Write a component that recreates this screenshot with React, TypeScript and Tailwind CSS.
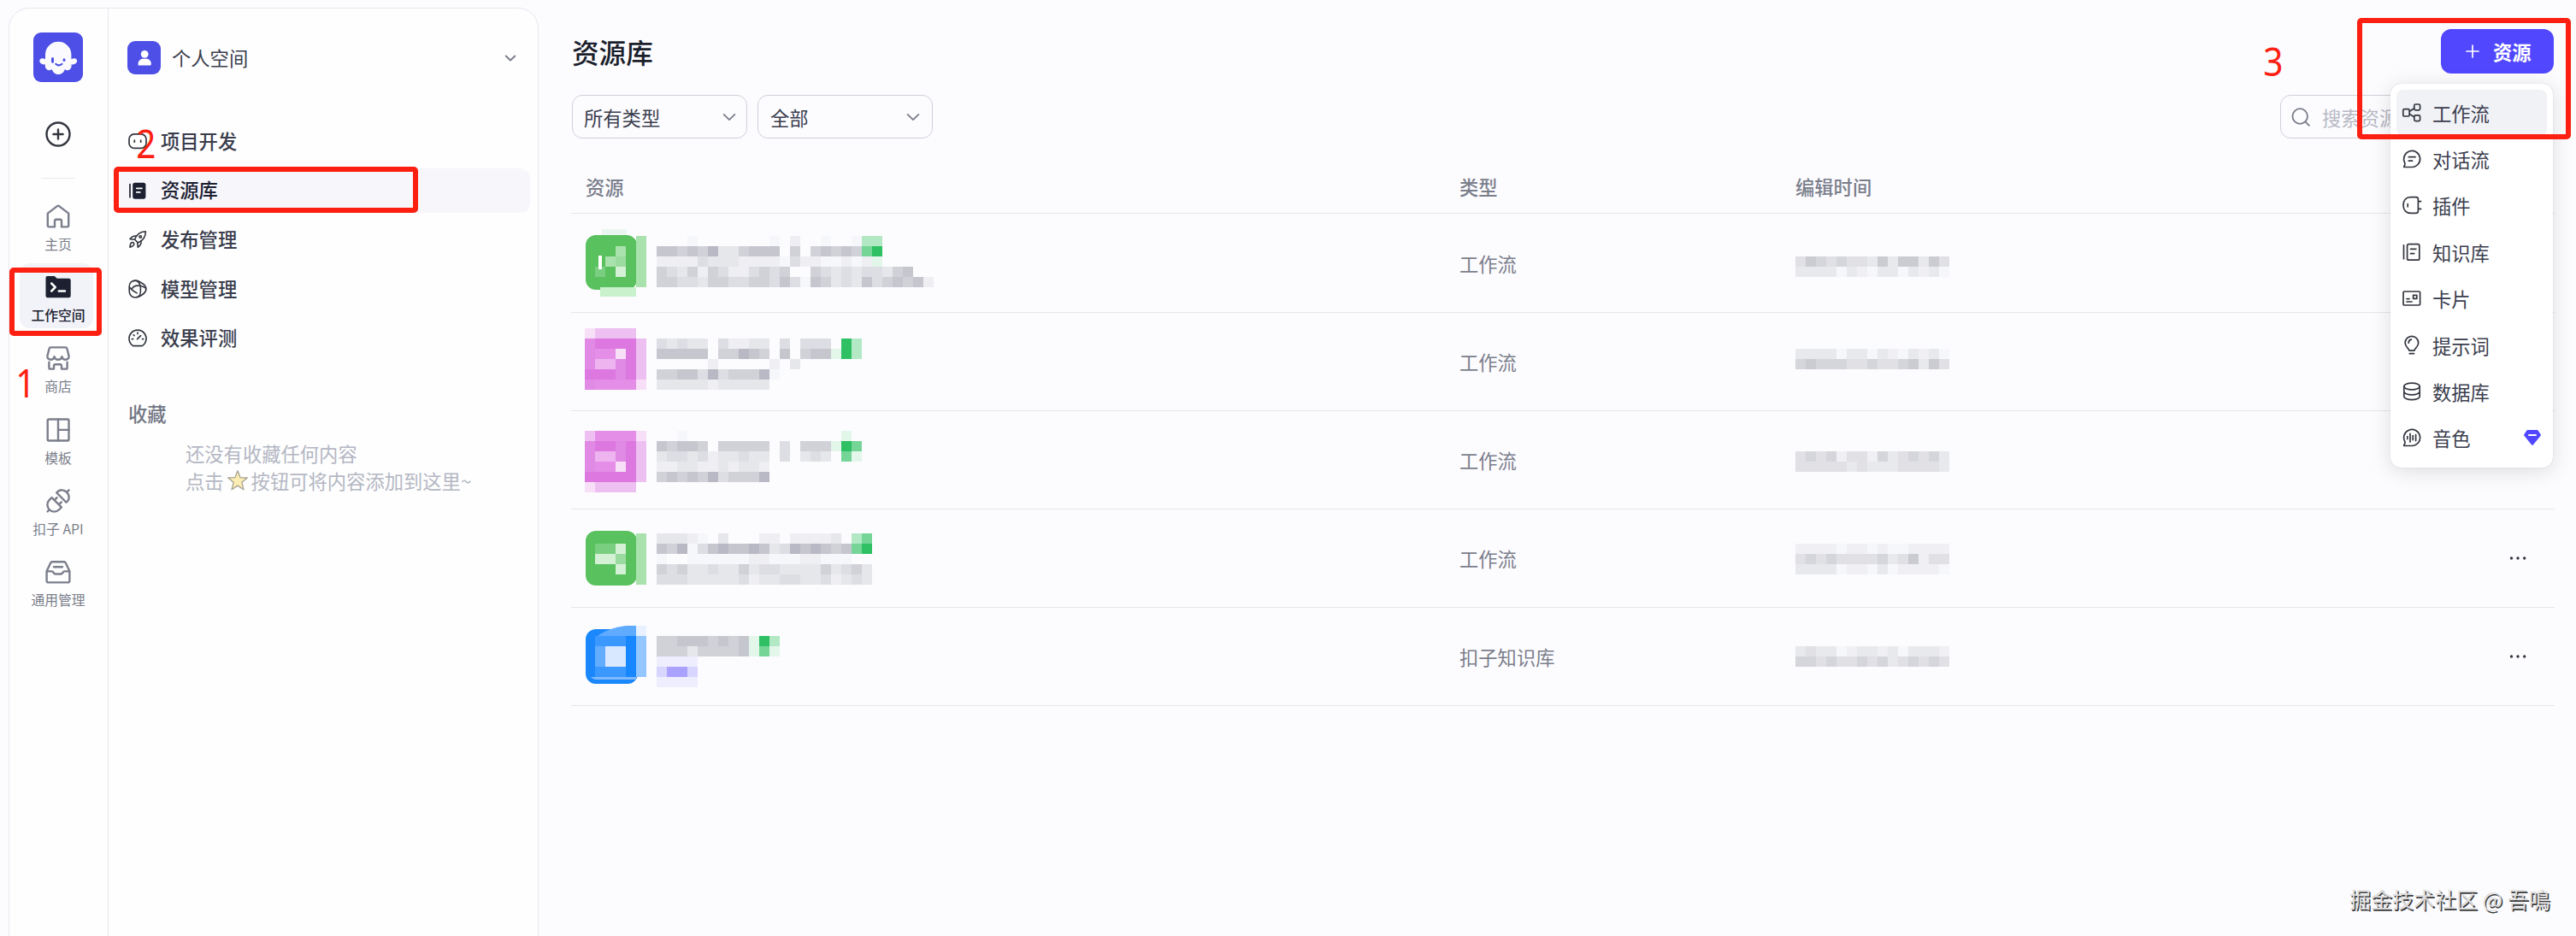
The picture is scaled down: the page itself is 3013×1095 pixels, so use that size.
import React from "react";

type IconProps = { children: React.ReactNode; className?: string; sw?: number };

/** 32-unit outline icon used in the left rail. */
const RailIcon = ({ children, className = "text-[#7b7e8b]" }: IconProps) => (
  <svg viewBox="0 0 32 32" className={`h-8 w-8 shrink-0 ${className}`} fill="none" stroke="currentColor" strokeWidth="2.4" strokeLinecap="round" strokeLinejoin="round">
    {children}
  </svg>
);

/** 24-unit outline icon used in menus. */
const MenuIcon = ({ children, className = "text-[#33363f]", sw = 1.7 }: IconProps) => (
  <svg viewBox="0 0 24 24" className={`h-6 w-6 shrink-0 ${className}`} fill="none" stroke="currentColor" strokeWidth={sw} strokeLinecap="round" strokeLinejoin="round">
    {children}
  </svg>
);

const Chevron = ({ className }: { className: string }) => (
  <svg viewBox="0 0 16 16" className={`h-4 w-4 ${className}`} fill="none" stroke="currentColor" strokeWidth="1.7" strokeLinecap="round" strokeLinejoin="round">
    <path d="M1.6 4.8 8 11.2l6.4-6.4" />
  </svg>
);

const railItems = [
  {
    label: "主页",
    icon: (
      <RailIcon>
        <path d="M3.8 12.6 14.9 4.1a1.8 1.8 0 0 1 2.2 0l11.1 8.5V27a1.4 1.4 0 0 1-1.4 1.4H20v-6.6a2 2 0 0 0-2-2h-4a2 2 0 0 0-2 2v6.6H5.2A1.4 1.4 0 0 1 3.8 27Z" />
      </RailIcon>
    ),
  },
  {
    label: "工作空间",
    active: true,
    icon: (
      <RailIcon className="text-[#1c2030]">
        <path d="M1.5 5A2 2 0 0 1 3.5 3h8.2l3 2.8h13.8a2.2 2.2 0 0 1 2.2 2.2v18a2.2 2.2 0 0 1-2.2 2.200H3.700A2.200 2.200 0 0 1 1.500 26Z" fill="currentColor" stroke="none" />
        <path d="m8.200 11.500 4.500 4.500-4.500 4.500M16.800 20.600h7.200" stroke="#fff" strokeWidth="2.500" />
      </RailIcon>
    ),
  },
  {
    label: "商店",
    icon: (
      <RailIcon>
        <path d="M5.600 4.800A1.800 1.800 0 0 1 7.400 3.400h17.200a1.800 1.800 0 0 1 1.800 1.400l2.200 8.700c.2 2.900-1.800 4.200-3.900 4.200-2.200 0-3.900-1.600-4.300-3.500-.4 1.900-2.100 3.500-4.400 3.500s-4-1.600-4.400-3.500c-.4 1.900-2.100 3.500-4.300 3.500-2.100 0-4.100-1.300-3.900-4.200Z" />
        <path d="M5.400 20.600v6.600a1.400 1.400 0 0 0 1.400 1.400H11v-3.400a2 2 0 0 1 2-2h5a2 2 0 0 1 2 2v3.400h5.200a1.400 1.400 0 0 0 1.400-1.400v-6.600" />
      </RailIcon>
    ),
  },
  {
    label: "模板",
    icon: (
      <RailIcon>
        <rect x="3.700" y="3.500" width="24.800" height="25" rx="1.600" />
        <path d="M16 3.500v25M16 15.900h12.500" />
      </RailIcon>
    ),
  },
  {
    label: "扣子 API",
    icon: (
      <RailIcon>
        <g transform="rotate(45 16 16)">
          <path d="M8 10.500h16v-1.800a8 7 0 0 0-16 0ZM16 1.700V-1.800" />
          <path d="M8 18.500h16v4a8 8 0 0 1-16 0ZM16 30.500v3M12.300 18.200v-3.900M19.700 18.200v-3.900" />
        </g>
      </RailIcon>
    ),
  },
  {
    label: "通用管理",
    icon: (
      <RailIcon>
        <path d="M2.600 15.200 7.200 5.400a2 2 0 0 1 1.800-1.200h14a2 2 0 0 1 1.800 1.200l4.600 9.800v11.400a1.800 1.800 0 0 1-1.800 1.800H4.400a1.800 1.800 0 0 1-1.800-1.800ZM2.600 15.400h6.200c1.600 0 1.800 3.100 4 3.100h6.400c2.200 0 2.400-3.100 4-3.100h6.200M11 10.300h10" />
      </RailIcon>
    ),
  },
];

const bookOutline = (
  <>
    <rect x="6.600" y="2.600" width="14.200" height="18.600" rx="1.800" />
    <path d="M2.500 3.800v16M10.500 8.300h6.400M10.500 13.600h4.200" />
  </>
);

const sideItems = [
  {
    label: "项目开发",
    icon: (
      <MenuIcon>
        <rect x="2" y="3.800" width="20" height="16.600" rx="6" />
        <path d="M8.300 11v2.200M15.700 11v2.200" />
      </MenuIcon>
    ),
  },
  {
    label: "资源库",
    active: true,
    icon: (
      <MenuIcon className="text-[#1c2030]">
        <rect x="6.200" y="2.700" width="15.200" height="19" rx="2.600" fill="currentColor" stroke="none" />
        <path d="M3 4.700v15" />
        <path d="M10.800 9.300h6.200M10.800 13.900h4" stroke="#fff" />
      </MenuIcon>
    ),
  },
  {
    label: "发布管理",
    icon: (
      <MenuIcon sw={1.6}>
        <path d="M8.600 12.200C10.500 6.600 14.600 3 21.300 2.700c.1 6.500-3.200 10.900-8.900 13.200Z" />
        <path d="M10.600 8.100c-3.200-.7-5.200.4-7.600 3.600l5.600.5M16 13.600c.6 3.200-.4 5.300-3.700 7.700l-.5-5.500" />
        <path d="M3 21.300c.1-3 .6-4.600 2-5.600 1.700-.7 3.300.8 2.600 2.600-1 1.600-2.200 2.300-4.600 3Z" />
        <circle cx="15.200" cy="9" r="1.300" />
      </MenuIcon>
    ),
  },
  {
    label: "模型管理",
    icon: (
      <MenuIcon sw={1.6}>
        <path d="M2.200 14.500V9.300c0-3.900 2.600-7.100 6.600-7.100 3.700 0 6.600 3.600 6.600 8.700v4.200c0 4.300-2.700 6.900-6.200 6.900-4 0-7-3-7-7.500Z" />
        <path d="M7 2.700c2-.9 4.400-.6 6.600.6l4.600 2.700c3.600 2.100 4.700 5.900 2.900 9-1.700 3-5.400 5.200-9.900 6.700" />
        <path d="M2.600 9.800c1 2 2.600 3.600 5.400 5.200l3.200 1.900M5.200 12.200C6.600 9 10 7.600 14.500 8.300c2.600.4 4.800 1 6.600 2.600" />
      </MenuIcon>
    ),
  },
  {
    label: "效果评测",
    icon: (
      <MenuIcon>
        <path d="M6.700 20.600a10 10 0 1 1 10.600 0Z" />
        <path d="m11.600 12.600 4-4M12 5.200v1.200M5.400 12.600h1.200M17.500 12.600h1.200M7.200 7.800l.8.800" />
      </MenuIcon>
    ),
  },
];

const createItems = [
  {
    label: "工作流",
    active: true,
    icon: (
      <MenuIcon>
        <rect x="1.800" y="7.600" width="7.400" height="8.400" rx="1.600" />
        <rect x="14.800" y="2" width="6.800" height="6.800" rx="1.600" />
        <rect x="14.800" y="14.800" width="6.800" height="6.800" rx="1.600" />
        <path d="m9.400 10.200 5.200-3.400M9.400 13.400l5.200 3.400" />
      </MenuIcon>
    ),
  },
  {
    label: "对话流",
    icon: (
      <MenuIcon>
        <path d="M3.300 21.500h8.900A9.500 9.500 0 1 0 3.800 16.600c.4 1.400.2 2.700-.9 4-.4.500-.1.900.4.900Z" />
        <path d="M8.300 9.700h7.800M8.300 14.200h4.300" />
      </MenuIcon>
    ),
  },
  {
    label: "插件",
    icon: (
      <MenuIcon>
        <path d="M10.600 2.600h6.200a2.600 2.600 0 0 1 2.600 2.600v13.600a2.600 2.600 0 0 1-2.600 2.600h-6.200C5.400 21.400 2 18 2 12s3.400-9.400 8.600-9.400ZM19.600 7.600h3M19.600 16.400h3M7.200 10.600v3.200" />
      </MenuIcon>
    ),
  },
  { label: "知识库", icon: <MenuIcon>{bookOutline}</MenuIcon> },
  {
    label: "卡片",
    icon: (
      <MenuIcon>
        <rect x="2" y="4" width="19.600" height="16" rx="1.200" />
        <rect x="13.600" y="8.300" width="4.200" height="4" />
        <path d="M6 12.600h3M6 16h6" />
      </MenuIcon>
    ),
  },
  {
    label: "提示词",
    icon: (
      <MenuIcon>
        <path d="M9 18.200c0-2.400-4.900-4-4.900-9.100a7.800 7.800 0 0 1 15.600 0c0 5.100-4.900 6.700-4.900 9.100ZM9.300 21.700h5.200M8.200 9.200c0-2.200 1.400-3.700 3.200-4" />
      </MenuIcon>
    ),
  },
  {
    label: "数据库",
    icon: (
      <MenuIcon>
        <ellipse cx="12" cy="6" rx="9.200" ry="3.900" />
        <path d="M2.800 6v11.800c0 2.200 4.100 3.900 9.200 3.900s9.200-1.700 9.200-3.900V6M2.800 12c0 2.200 4.100 3.900 9.200 3.900s9.200-1.700 9.200-3.900" />
      </MenuIcon>
    ),
  },
  {
    label: "音色",
    premium: true,
    icon: (
      <MenuIcon>
        <path d="M3.300 21.500h8.900A9.500 9.500 0 1 0 3.800 16.600c.4 1.400.2 2.700-.9 4-.4.500-.1.900.4.900Z" />
        <path d="M6.800 10.600v3M10 7.300v9.600M13.200 9.600v5M16.600 8.600v7" />
      </MenuIcon>
    ),
  },
];

/** Colours of the pixelated cells, one letter or digit per shade. */
const shades: Record<string, string> = {
  "1": "#f6f7fa",
  "2": "#efeff3",
  "3": "#e6e7eb",
  "4": "#dddee3",
  "5": "#d1d2d8",
  "6": "#c6c7ce",
  "7": "#b8b9c4",
  g: "#2fc063",
  h: "#75d597",
  i: "#b2e8c4",
  j: "#e2f6ea",
  p: "#eeeeff",
  q: "#d8d5fe",
  r: "#aba1ff",
  a: "#a9e2ad",
  b: "#7ace80",
  c: "#d4f1d6",
  d: "#9bdb9f",
  A: "#dd78e0",
  B: "#e48ee8",
  C: "#edb4f0",
  D: "#f8dff8",
  E: "#eec0f1",
  F: "#e08ae5",
  K: "#3a98ff",
  L: "#62adff",
  M: "#d8e8ff",
  N: "#94c6ff",
  O: "#e8f1ff",
  P: "#1787ff",
};

const Mosaic = ({ x, y, rows }: { x: number; y: number; rows: string[] }) => (
  <g shapeRendering="crispEdges">
    {rows.flatMap((row, r) =>
      row.split("").map((c, i) =>
        shades[c] ? <rect key={`${r}-${i}`} x={x + i * 12} y={y + r * 12} width="12" height="12" fill={shades[c]} /> : null
      )
    )}
  </g>
);

const resources = [
  {
    type: "工作流",
    top: 250,
    height: "h-[116px]",
    drawing: (
      <>
        <rect x="704" y="268" width="29" height="9" fill="#e9f6ee" />
        <rect x="685" y="275" width="60" height="64" rx="12" fill="#59c15e" />
        <rect x="702" y="336" width="42" height="11" fill="#c9f1cc" />
        <Mosaic x={684} y={276} rows={[".....a", "...a.a", "..ad.a", ".b.c.a", ".....a"]} />
        <rect x="700" y="299" width="4" height="16" fill="#fff" />
        <Mosaic
          x={768}
          y={276}
          rows={[
            "...1.......1.2..1..1ii",
            "665657335666.5.56565hg",
            "222243332222142211212j",
            "5435254224545..5434344356",
            "554435544554641653436456562",
          ]}
        />
      </>
    ),
    dateY: 300,
    date: ["465454436366364", "333313213313231"],
  },
  {
    type: "工作流",
    top: 366,
    height: "h-[115px]",
    drawing: (
      <>
        <Mosaic x={684} y={384} rows={["DEEEE", "FAAAAE", "FBBDAE", "FCCFAE", "AAAFAE", "FBBBBD"]} />
        <Mosaic
          x={768}
          y={396}
          rows={["43433.42233.4.444.gi", "66666.55765.6.566jgi", ".....2.....2.3", "556647455571", "33333233333"]}
        />
      </>
    ),
    dateY: 408,
    date: ["333313313213231", "565554454456364"],
  },
  {
    type: "工作流",
    top: 481,
    height: "h-[115px]",
    drawing: (
      <>
        <Mosaic x={684} y={504} rows={["EBBBBD", "FAAFAE", "FCCFAE", "FBBDAE", "AAAAAE", "DEEEE"]} />
        <Mosaic
          x={768}
          y={504}
          rows={["..1...............j", "65665.55555.4.555jgh", "34434233433.4.343.hj", "22332232332", "56565745557"]}
        />
      </>
    ),
    dateY: 528,
    date: ["454524425345453", "444443433344443"],
  },
  {
    type: "工作流",
    top: 596,
    height: "h-[115px]",
    more: true,
    drawing: (
      <>
        <rect x="685" y="621" width="60" height="64" rx="12" fill="#59c15e" />
        <Mosaic x={684} y={624} rows={[".....a", ".bbc.a", ".ccd.a", "...c.a", ".....a"]} />
        <Mosaic
          x={768}
          y={624}
          rows={[
            "33321.3...22.22223.ih",
            "6571467667634767656hg",
            "1..1111112211122111",
            "545334335344333353453",
            "444333334233443342343",
          ]}
        />
      </>
    ),
    dateY: 636,
    date: ["222212212112222", "454544445346244", "333312213122221"],
  },
  {
    type: "扣子知识库",
    top: 711,
    height: "h-[115px]",
    more: true,
    drawing: (
      <>
        <rect x="685" y="736" width="61" height="64" rx="12" fill="#1a88fc" />
        <path d="M700 743 Q714 734 732 732 H744 V744 H700Z" fill="#5fabff" />
        <Mosaic x={684} y={732} rows={[".....O", ".KKKPN", ".LMMPN", ".LMMPN", ".KKKPN"]} />
        <path d="M691 792H744V795H696Q693 794 691 792Z" fill="#7fb9fb" />
        <Mosaic x={768} y={744} rows={["556665656jgi", "555355556jhj", "pppp", "qrrq", "pppp"]} />
      </>
    ),
    dateY: 756,
    date: ["343312332313332", "554544545345454"],
  },
];

const Select = ({ label, pad }: { label: string; pad: string }) => (
  <div className={`flex h-[51px] w-[205px] items-center justify-between rounded-xl border border-[#cfd0da] ${pad}`}>
    <span className="text-[22.3px] leading-8 text-[#3a3d4d]">{label}</span>
    <Chevron className="text-[#777a86]" />
  </div>
);

const Rail = () => (
  <nav className="flex w-[116px] shrink-0 flex-col items-center border-r border-[#e6e7ee] pr-px pt-7">
    <svg viewBox="0 0 58 58" className="h-[58px] w-[58px]">
      <rect width="58" height="58" rx="9" fill="#4d4fe6" />
      <path d="M14 26a15.200 15.200 0 0 1 30.400 0v5c2 0 3-.9 4.500-.6 1.900.4 2.700 2.200 2 4-.9 2.200-3.400 3-6.600 3.200 1.300 3.300-1.400 7-4.600 6.600-1.200-.1-2-.6-2.800-1.300-1.100 3.400-3.600 6-7.700 6s-6.400-2.700-7.600-6c-.8.700-1.700 1.200-2.900 1.300-3.200.3-5.800-3.300-4.600-6.600-3.200-.2-5.700-1-6.600-3.200-.7-1.800.1-3.600 2-4 1.500-.3 2.500.6 4.500.6Z" fill="#fbfbff" />
      <path d="M22.500 30.500v3.800M36 31.800v.6" stroke="#4d4fe6" strokeWidth="3" strokeLinecap="round" />
      <path d="M26.200 36.800q3.200 3.200 7.400 0" stroke="#4d4fe6" strokeWidth="2" fill="none" strokeLinecap="round" />
    </svg>
    <RailIcon className="mt-[45px] text-[#33363f]">
      <circle cx="16" cy="16" r="13.500" />
      <path d="M16 10.400v11.200M10.400 16h11.200" />
    </RailIcon>
    <div className="mt-[35px] h-px w-10 bg-[#e6e7ee]" />
    <div className="mt-[28px] flex flex-col items-center">
      {railItems.map((item) => (
        <div key={item.label} className="relative flex h-[83.200px] w-[98px] flex-col items-center">
          {item.active && <div className="absolute -top-3 left-1 h-[76px] w-[86px] rounded-xl bg-[#f1f3f8]" />}
          <div className="relative">{item.icon}</div>
          <span className={`relative mt-[7px] whitespace-nowrap text-[15.800px] leading-5 ${item.active ? "font-medium text-[#1c2030]" : "text-[#7b7e8b]"}`}>{item.label}</span>
        </div>
      ))}
    </div>
  </nav>
);

const SidePanel = () => (
  <aside className="flex-1">
    <div className="flex items-center pl-[22px] pr-6 pt-[38px]">
      <div className="flex h-[39px] w-[39px] items-center justify-center rounded-[9px] bg-[#4d4fe6]">
        <svg viewBox="0 0 16 20" className="h-5 w-4" fill="#fff">
          <circle cx="8.200" cy="5.300" r="4.400" />
          <path d="M.6 18.400v-1.700c0-3.400 2.500-5.900 5.600-5.900h4c3.100 0 5.600 2.500 5.600 5.900v.6c0 .7-.4 1.100-1.100 1.100Z" />
        </svg>
      </div>
      <span className="-mt-px ml-[13px] flex-1 text-[22.300px] leading-8 text-[#3a3d4d]">个人空间</span>
      <svg viewBox="0 0 16 16" className="h-4 w-4 text-[#7b7e8b]" fill="none" stroke="currentColor" strokeWidth="2" strokeLinecap="round" strokeLinejoin="round">
        <path d="m2.700 5.600 5.300 5 5.300-5" />
      </svg>
    </div>
    <div className="mt-[52px] flex flex-col gap-[5.700px] pl-2 pr-[9px]">
      {sideItems.map((item) => (
        <div key={item.label} className={`flex h-[52px] items-center rounded-xl pl-[14px] ${item.active ? "bg-[#f6f6fb]" : ""}`}>
          {item.icon}
          <span className={`mb-[3px] ml-[15px] text-[22.300px] font-medium leading-8 ${item.active ? "text-[#1c2030]" : "text-[#3a3d4d]"}`}>{item.label}</span>
        </div>
      ))}
    </div>
    <div className="mt-[45px] pl-[23px] text-[22.300px] font-medium leading-8 text-[#727684]">收藏</div>
    <div className="mt-[15px] pl-[90px] text-[22.300px] leading-8 text-[#b4b7c3]">
      <div>还没有收藏任何内容</div>
      <div className="flex items-center">
        点击
        <svg viewBox="0 0 26 26" className="mx-[3px] h-[26px] w-[26px]">
          <path d="m13 1.800 3 7.800 8.300.4-6.500 5.200 2.200 8.600-7-4.700-7 4.700 2.200-8.600L1.700 10l8.300-.4Z" fill="#fcedb2" stroke="#a5a294" strokeWidth="1.300" strokeLinejoin="round" />
        </svg>
        按钮可将内容添加到这里~
      </div>
    </div>
  </aside>
);

const CreateMenu = () => (
  <div className="absolute left-[2796px] top-[98px] flex h-[449px] w-[190px] flex-col rounded-xl bg-white px-[7px] pt-[6.500px] shadow-[0_4px_24px_rgba(0,0,0,0.13),0_0_1px_rgba(0,0,0,0.25)]">
    {createItems.map((item) => (
      <div key={item.label} className={`flex h-[54.400px] shrink-0 items-center rounded-lg pl-[6px] pr-[7px] ${item.active ? "bg-[#f1f2f6]" : ""}`}>
        {item.icon}
        <span className="ml-[12px] flex-1 text-[22.300px] leading-8 text-[#3a3d4d]">{item.label}</span>
        {item.premium && (
          <svg viewBox="0 0 20 20" className="h-5 w-5">
            <path d="M4.600 1h10.800c.6 0 1 .2 1.300.7l3 4.600c.3.500.3.900-.1 1.400L11 18.300c-.6.700-1.400.7-2 0L.4 7.700C0 7.200 0 6.800.3 6.300l3-4.600c.3-.5.7-.7 1.300-.7Z" fill="#5147ff" />
            <path d="M6 7h8" stroke="#fff" strokeWidth="2" strokeLinecap="round" />
          </svg>
        )}
      </div>
    ))}
  </div>
);

const Library = () => (
  <main className="flex-1 pl-[38px] pr-[25px]">
    <div className="mt-[34px] flex h-[52px] items-center justify-between pr-px">
      <h1 className="pl-px text-[31.600px] font-medium leading-[48px] text-[#1b1f2b]">资源库</h1>
      <button className="flex h-[52px] w-[132px] items-center rounded-xl bg-[#5147ff] pl-[29px] text-white">
        <svg viewBox="0 0 16 16" className="h-4 w-4" stroke="#fff" strokeWidth="1.700" strokeLinecap="round">
          <path d="M8 1v14M1 8h14" />
        </svg>
        <span className="ml-[16px] text-[22.300px] font-bold leading-8">资源</span>
      </button>
    </div>
    <div className="mt-[25px] flex items-center pl-px">
      <Select label="所有类型" pad="pl-[13px] pr-3" />
      <div className="w-3" />
      <Select label="全部" pad="pl-[14px] pr-[14px]" />
      <div className="ml-auto mr-[3px] flex h-[51px] w-[318px] items-center rounded-xl border border-[#cfd0da] pl-[11px]">
        <svg viewBox="0 0 24 24" className="h-6 w-6" fill="none" stroke="#777a86" strokeWidth="1.800" strokeLinecap="round">
          <circle cx="11.200" cy="11" r="8.800" />
          <path d="m17.600 17.600 4.300 4.200" />
        </svg>
        <span className="ml-[13px] text-[22.300px] leading-8 text-[#b7b9c4]">搜索资源</span>
      </div>
    </div>
    <div className="mt-[26px] grid h-[62px] grid-cols-[1039px_393px_1fr] items-center border-b border-[#e4e5ea] pb-px text-[22.300px] font-medium leading-8 text-[#7b7e8b]">
      <span className="pl-[17px]">资源</span>
      <span>类型</span>
      <span>编辑时间</span>
    </div>
    {resources.map((row, i) => (
      <div key={i} className={`grid grid-cols-[1039px_393px_1fr_64px] items-center border-b border-[#e4e5ea] ${row.height}`}>
        <svg viewBox={`668 ${row.top} 450 114`} className="h-[114px] w-[450px] self-start">
          {row.drawing}
        </svg>
        <span className="text-[22.300px] leading-8 text-[#7b7e8b]">{row.type}</span>
        <svg viewBox={`2100 ${row.top} 180 114`} className="h-[114px] w-[180px] self-start opacity-90">
          <Mosaic x={2100} y={row.dateY} rows={row.date} />
        </svg>
        {row.more && (
          <svg viewBox="0 0 24 24" className="ml-[9px] h-6 w-6" fill="#33363f">
            <circle cx="4.500" cy="12" r="1.700" />
            <circle cx="12" cy="12" r="1.700" />
            <circle cx="19.700" cy="12" r="1.700" />
          </svg>
        )}
      </div>
    ))}
  </main>
);

const frames = [
  "left-[11px] top-[313px] h-[80px] w-[108px]",
  "left-[133px] top-[195px] h-[54px] w-[356px]",
  "left-[2757px] top-[21px] h-[142px] w-[250px]",
];

const steps = [
  { n: "1", at: "left-[17px] top-[424px]" },
  { n: "2", at: "left-[158px] top-[144px]" },
  { n: "3", at: "left-[2646px] top-[48px]" },
];

export default function App() {
  return (
    <div className="relative flex h-[1095px] w-[3013px] overflow-hidden bg-[#fcfcff] font-['Noto_Sans_CJK_SC','Noto_Sans',sans-serif]">
      <div className="ml-[10px] mt-[9px] flex h-[1110px] w-[620px] shrink-0 rounded-3xl border border-[#e6e7ee] bg-[#fefefe]">
        <Rail />
        <SidePanel />
      </div>
      <Library />
      <CreateMenu />
      {frames.map((f) => (
        <div key={f} className={`absolute rounded-[5px] border-[6px] border-[#fb2012] ${f}`} />
      ))}
      {steps.map((s) => (
        <span key={s.n} className={`absolute scale-x-90 font-['Noto_Sans',sans-serif] text-[45px] leading-[48px] text-[#fb2012] ${s.at}`}>
          {s.n}
        </span>
      ))}
      <div className="absolute left-[2748px] top-[1033px] whitespace-nowrap text-[25px] leading-9 text-[#dedede] [text-shadow:1.5px_1.5px_0_#3c3c3c]">掘金技术社区 @ 吾鳴</div>
    </div>
  );
}
